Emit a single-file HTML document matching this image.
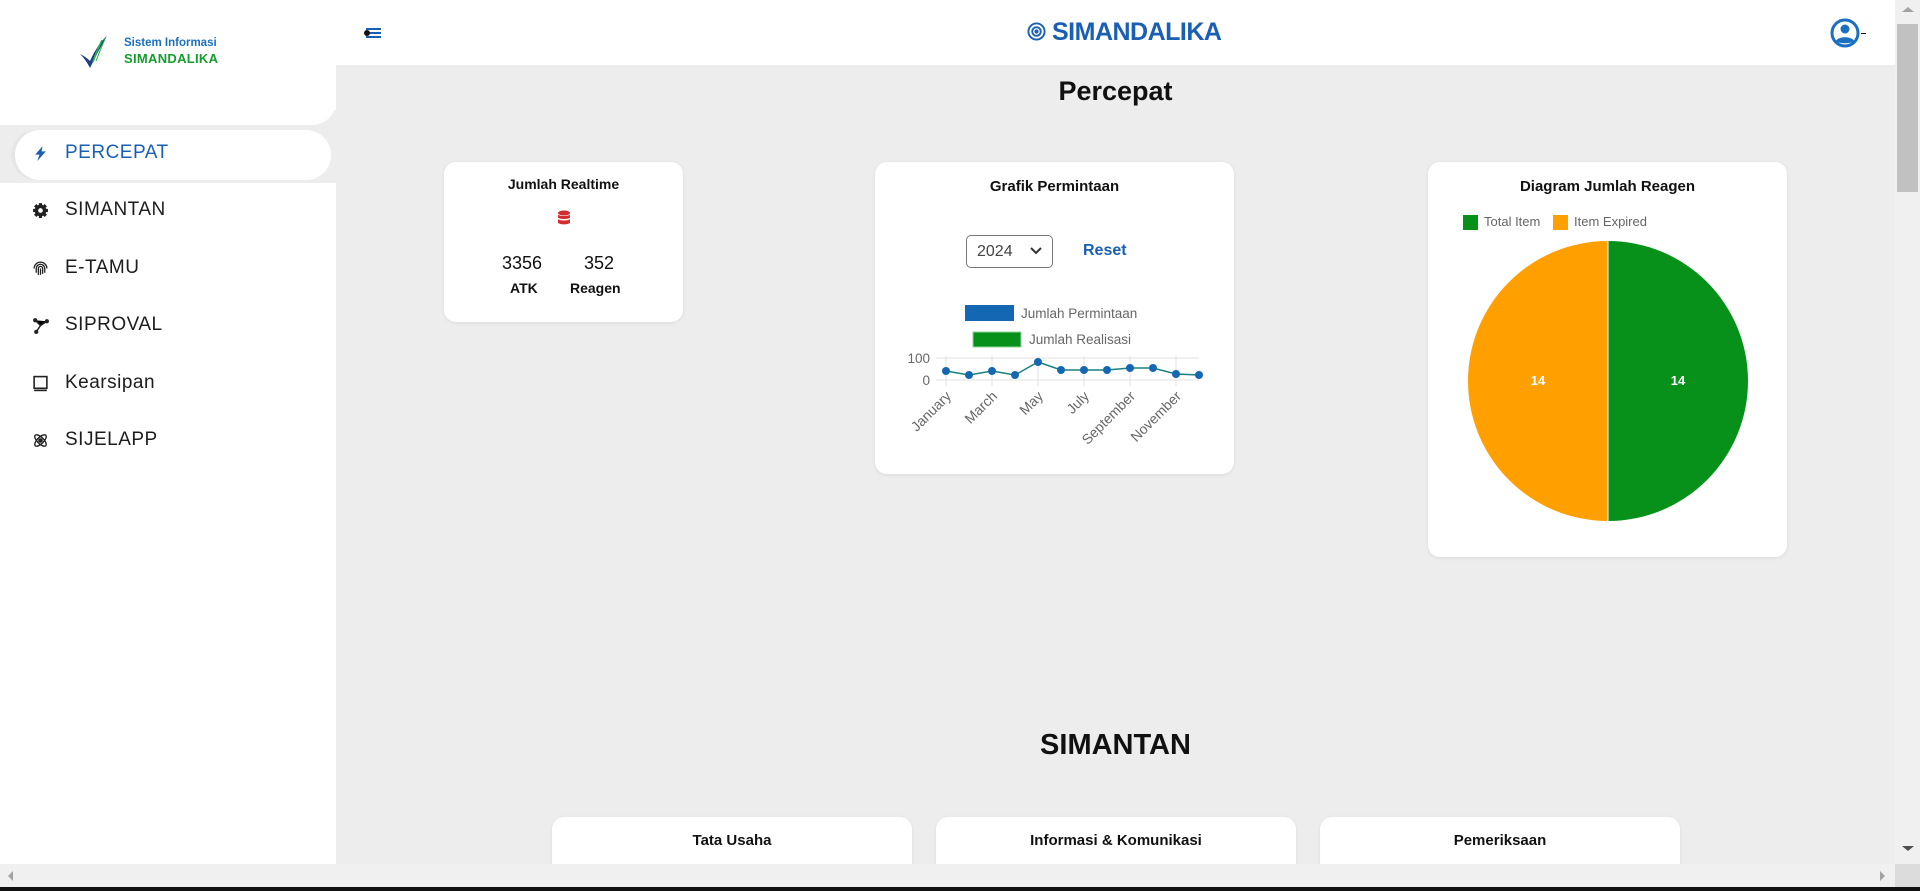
<!DOCTYPE html>
<html><head><meta charset="utf-8"><style>
*{margin:0;padding:0;box-sizing:border-box}
body{width:1920px;height:891px;overflow:hidden;background:#eeeded;font-family:"Liberation Sans",sans-serif;position:relative}
.abs{position:absolute}
.side{left:0;top:0;width:336px;height:864px;background:#fff}
.sidetop{left:0;top:0;width:336px;height:125px;background:#fff;border-bottom-right-radius:24px;z-index:2}
.grey{left:0;top:110px;width:336px;height:73px;background:#eeeded}
.pill{left:15px;top:130px;width:316px;height:50px;background:#fff;border-radius:25px;box-shadow:-4px 0 0 #e6e6e6}
.item{left:32px;font-size:19px;color:#1c1c1c;letter-spacing:.5px;display:flex;align-items:center}
.item svg{width:17px;height:17px;margin-right:16px}
.header{left:336px;top:0;width:1559px;height:65px;background:#fff}
.card{background:#fff;border-radius:12px;box-shadow:0 1px 4px rgba(0,0,0,.08)}
.ct{font-weight:bold;font-size:15px;color:#111;text-align:center}
</style></head><body>
<div class="abs side"></div>
<div class="abs grey"></div>
<div class="abs sidetop">
<svg class="abs" style="left:78px;top:34px" width="32" height="36" viewBox="0 0 32 36"><path d="M2 20 C6 24 9 28 12 34 C17 24 22 14 29 2 C22 8 16 18 12 27 C9 24 6 22 2 20Z" fill="#1c3f86"/><path d="M24 6 C20 14 17 22 15 28" stroke="#2bb24c" stroke-width="1.5" fill="none"/><path d="M27 5 C23 14 20 22 18 27" stroke="#2bb24c" stroke-width="1" fill="none"/></svg>
<div class="abs" style="left:124px;top:37px;font-size:11.5px;font-weight:bold;color:#1a6fc0">Sistem Informasi</div>
<div class="abs" style="left:124px;top:51px;font-size:13px;font-weight:bold;color:#149c2c;letter-spacing:.3px">SIMANDALIKA</div>
</div>
<div class="abs pill"></div>
<div class="abs item" style="top:142px;color:#1a5fb4"><svg viewBox="0 0 16 16"><path d="M10 1 L3 9 H7 L5 15 L13 6 H9 Z" fill="#1a5fb4"/></svg>PERCEPAT</div>
<div class="abs item" style="top:199px"><svg viewBox="0 0 16 16"><circle cx="8" cy="8" r="5.5" fill="#222"/><g stroke="#222" stroke-width="3"><path d="M8 1v14M1 8h14M3 3l10 10M13 3L3 13"/></g><circle cx="8" cy="8" r="2.2" fill="#fff"/></svg>SIMANTAN</div>
<div class="abs item" style="top:257px"><svg viewBox="0 0 16 16" fill="none" stroke="#222" stroke-width="1.2"><path d="M2 8a6 6 0 0 1 12 0M4 12V8a4 4 0 0 1 8 0v4M6 14V8a2 2 0 0 1 4 0v5M8 8v6"/></svg>E-TAMU</div>
<div class="abs item" style="top:314px"><svg viewBox="0 0 16 16"><g stroke="#222" stroke-width="1.4"><path d="M3 3L8 8L14 4M8 8L4 14"/></g><circle cx="3" cy="3" r="2" fill="#222"/><circle cx="14" cy="4" r="2" fill="#222"/><circle cx="4" cy="14" r="2" fill="#222"/></svg>SIPROVAL</div>
<div class="abs item" style="top:372px"><svg viewBox="0 0 16 16" fill="none" stroke="#222" stroke-width="1.5"><rect x="2" y="1.5" width="12" height="11"/><path d="M2 14.5h12"/></svg>Kearsipan</div>
<div class="abs item" style="top:429px"><svg viewBox="0 0 16 16" fill="none" stroke="#222" stroke-width="1.3"><ellipse cx="8" cy="8" rx="7" ry="3" transform="rotate(45 8 8)"/><ellipse cx="8" cy="8" rx="7" ry="3" transform="rotate(-45 8 8)"/><circle cx="8" cy="8" r="1.5" fill="#222"/></svg>SIJELAPP</div>

<div class="abs header"></div>
<div class="abs" style="left:366px;top:28px;width:15px"><div style="height:2px;background:#1a5fb4;margin-bottom:2px"></div><div style="height:2px;background:#1a5fb4;margin-bottom:2px"></div><div style="height:2px;background:#1a5fb4"></div></div>
<div class="abs" style="left:364px;top:30px;width:6px;height:6px;border-radius:3px;background:#111"></div>
<svg class="abs" style="left:1027px;top:22px" width="19" height="19" viewBox="0 0 20 20" fill="none" stroke="#1a5fb4" stroke-width="2"><circle cx="10" cy="10" r="8.5"/><circle cx="10" cy="10" r="4.5"/><circle cx="10" cy="10" r="1.2" fill="#1a5fb4"/></svg>
<div class="abs" style="left:1052px;top:18px;font-size:25px;font-weight:bold;color:#1a5fb4;letter-spacing:-.5px">SIMANDALIKA</div>
<svg class="abs" style="left:1830px;top:18px" width="30" height="30" viewBox="0 0 30 30"><circle cx="15" cy="15" r="13" fill="none" stroke="#1a6fc0" stroke-width="3"/><circle cx="15" cy="11" r="4.5" fill="#1a6fc0"/><path d="M6 23c2-5 16-5 18 0c-3 3-15 3-18 0z" fill="#1a6fc0"/></svg>
<div class="abs" style="left:1861px;top:33px;width:5px;height:1px;background:#111"></div>

<div class="abs" style="left:336px;width:1559px;top:76px;text-align:center;font-size:27px;font-weight:bold;color:#111">Percepat</div>

<div class="abs card" style="left:444px;top:162px;width:239px;height:160px">
<div class="ct" style="margin-top:14px;font-size:14px">Jumlah Realtime</div>
<svg class="abs" style="left:113px;top:48px" width="14" height="16" viewBox="0 0 14 16" fill="#d22d2d"><ellipse cx="7" cy="3" rx="6" ry="2.5"/><path d="M1 4.5c1 2 11 2 12 0v3c-1 2-11 2-12 0z"/><path d="M1 9c1 2 11 2 12 0v3.5c-1 2.5-11 2.5-12 0z"/></svg>
<div class="abs" style="left:58px;top:91px;font-size:18px;color:#111">3356</div>
<div class="abs" style="left:140px;top:91px;font-size:18px;color:#111">352</div>
<div class="abs" style="left:66px;top:118px;font-size:14px;font-weight:bold;color:#111">ATK</div>
<div class="abs" style="left:126px;top:118px;font-size:14px;font-weight:bold;color:#111">Reagen</div>
</div>

<div class="abs card" style="left:875px;top:162px;width:359px;height:312px">
<div class="ct" style="margin-top:16px">Grafik Permintaan</div>
</div>
<div class="abs" style="left:966px;top:235px;width:87px;height:33px;border:1px solid #777;border-radius:5px;background:#fff;font-size:16px;color:#444;padding:7px 0 0 10px">2024</div>
<svg class="abs" style="left:1030px;top:246px" width="12" height="10" viewBox="0 0 12 10"><path d="M1 2l5 5 5-5" stroke="#333" stroke-width="2" fill="none"/></svg>
<div class="abs" style="left:1083px;top:242px;font-size:16px;font-weight:bold;color:#1a5fb4">Reset</div>
<svg class="abs" style="left:875px;top:295px" width="359" height="175" viewBox="875 295 359 175" font-family="Liberation Sans" font-size="13.5" fill="#666">
<rect x="965" y="305" width="49" height="16" fill="#1467b3"/><text x="1021" y="318">Jumlah Permintaan</text>
<rect x="973" y="332" width="48" height="15" fill="#07911a" stroke="#8fd39a"/><text x="1029" y="344">Jumlah Realisasi</text>
<g stroke="#e2e2e2"><path d="M936 358H1199M936 380H1199"/><path d="M946 356V386M992 356V386M1038 356V386M1084 356V386M1130 356V386M1176 356V386"/></g>
<text x="930" y="363" text-anchor="end">100</text><text x="930" y="385" text-anchor="end">0</text>
<polyline fill="none" stroke="#1a8080" stroke-width="1.5" points="946,371 969,375 992,371 1015,375 1038,362 1061,370 1084,370 1107,370 1130,368 1153,368 1176,374 1199,375"/>
<g fill="#1467b3"><circle cx="946" cy="371" r="4"/><circle cx="969" cy="375" r="4"/><circle cx="992" cy="371" r="4"/><circle cx="1015" cy="375" r="4"/><circle cx="1038" cy="362" r="4"/><circle cx="1061" cy="370" r="4"/><circle cx="1084" cy="370" r="4"/><circle cx="1107" cy="370" r="4"/><circle cx="1130" cy="368" r="4"/><circle cx="1153" cy="368" r="4"/><circle cx="1176" cy="374" r="4"/><circle cx="1199" cy="375" r="4"/></g>
<g text-anchor="end" font-size="14"><text transform="translate(952 397) rotate(-45)">January</text><text transform="translate(998 397) rotate(-45)">March</text><text transform="translate(1044 397) rotate(-45)">May</text><text transform="translate(1090 397) rotate(-45)">July</text><text transform="translate(1136 397) rotate(-45)">September</text><text transform="translate(1182 397) rotate(-45)">November</text></g>
</svg>

<div class="abs card" style="left:1428px;top:162px;width:359px;height:395px">
<div class="ct" style="margin-top:16px">Diagram Jumlah Reagen</div>
</div>
<svg class="abs" style="left:1428px;top:162px" width="359" height="395" viewBox="1428 162 359 395" font-family="Liberation Sans" font-size="13">
<rect x="1463" y="215" width="15" height="15" fill="#07911a"/><text x="1484" y="226" fill="#666">Total Item</text>
<rect x="1553" y="215" width="15" height="15" fill="#ff9f00"/><text x="1574" y="226" fill="#666">Item Expired</text>
<path d="M1608 241A140 140 0 0 1 1608 521Z" fill="#07911a"/>
<path d="M1608 241A140 140 0 0 0 1608 521Z" fill="#ff9f00"/>
<path d="M1608 241V521" stroke="#fff"/>
<text x="1678" y="385" fill="#fff" font-weight="bold" text-anchor="middle">14</text>
<text x="1538" y="385" fill="#fff" font-weight="bold" text-anchor="middle">14</text>
</svg>

<div class="abs" style="left:336px;width:1559px;top:729px;text-align:center;font-size:29px;font-weight:bold;color:#111">SIMANTAN</div>
<div class="abs card" style="left:552px;top:817px;width:360px;height:60px"><div class="ct" style="margin-top:15px">Tata Usaha</div></div>
<div class="abs card" style="left:936px;top:817px;width:360px;height:60px"><div class="ct" style="margin-top:15px">Informasi &amp; Komunikasi</div></div>
<div class="abs card" style="left:1320px;top:817px;width:360px;height:60px"><div class="ct" style="margin-top:15px">Pemeriksaan</div></div>

<div class="abs" style="left:1895px;top:0;width:25px;height:864px;background:#f0f0f0"></div>
<div class="abs" style="left:1897px;top:24px;width:21px;height:168px;background:#c1c1c1"></div>
<div class="abs" style="left:1902px;top:7px;width:0;height:0;border-left:6px solid transparent;border-right:6px solid transparent;border-bottom:5px solid #a3a3a3"></div>
<div class="abs" style="left:1902px;top:846px;width:0;height:0;border-left:6px solid transparent;border-right:6px solid transparent;border-top:5px solid #505050"></div>
<div class="abs" style="left:0;top:864px;width:1895px;height:23px;background:#f0f0f0"></div>
<div class="abs" style="left:1895px;top:864px;width:25px;height:23px;background:#dcdcdc"></div>
<div class="abs" style="left:8px;top:871px;width:0;height:0;border-top:5px solid transparent;border-bottom:5px solid transparent;border-right:5px solid #a3a3a3"></div>
<div class="abs" style="left:1880px;top:871px;width:0;height:0;border-top:5px solid transparent;border-bottom:5px solid transparent;border-left:5px solid #a3a3a3"></div>
<div class="abs" style="left:0;top:887px;width:1920px;height:4px;background:#111"></div>
</body></html>
